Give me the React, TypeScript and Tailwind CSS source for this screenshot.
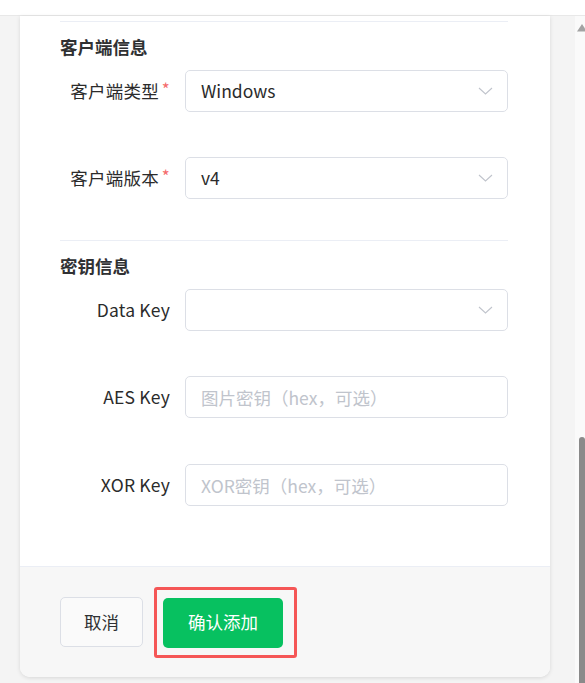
import React from 'react';

const font = "font-['Noto_Sans_CJK_SC','Noto_Sans',sans-serif]";

const Chevron = () => (
  <svg width="15" height="8" viewBox="0 0 15 8" fill="none" className="shrink-0">
    <path d="M1 1l6.5 6L14 1" stroke="#c0c4cc" strokeWidth="1.1" />
  </svg>
);

interface RowProps {
  label: string;
  required?: boolean;
  className?: string;
  children: React.ReactNode;
}

const FormRow: React.FC<RowProps> = ({ label, required, className = '', children }) => (
  <div className={`flex items-center h-[42px] ${className}`}>
    <div className="w-[110px] shrink-0 flex items-center justify-end text-[17.5px] text-[#2b2b2b] whitespace-nowrap tracking-[0.2px]">
      <span>{label}</span>
      {required && (
        <span className="ml-[3px] text-[17px] leading-none text-[#f56c6c] relative -top-[3px]">*</span>
      )}
    </div>
    <div className="ml-[15px] flex-1 h-full">{children}</div>
  </div>
);

const SelectBox: React.FC<{ value?: string }> = ({ value }) => (
  <div className="h-full flex items-center justify-between pl-[15px] pr-[14px] border border-[#dcdfe6] rounded-[5px] bg-white">
    <span className="text-[17.5px] text-[#2b2b2b]">{value}</span>
    <Chevron />
  </div>
);

const TextBox: React.FC<{ placeholder: string }> = ({ placeholder }) => (
  <input
    readOnly
    placeholder={placeholder}
    className={`w-full h-full px-[15px] border border-[#dcdfe6] rounded-[5px] bg-white text-[17.5px] text-[#303133] placeholder:text-[#c0c4cc] outline-none ${font}`}
  />
);

export default function App() {
  return (
    <div className={`h-[683px] w-[585px] overflow-hidden flex flex-col bg-white ${font}`}>
      {/* top strip */}
      <div className="h-[16px] shrink-0 bg-white border-b border-[#e8e8e8]" />

      <div className="flex flex-1 min-h-0">
        {/* page */}
        <div className="flex-1 bg-[#f4f4f4] pl-[20px] pr-[25px]">
          <div className="bg-white rounded-b-[10px] shadow-[0_1px_4px_rgba(0,0,0,0.12)] overflow-hidden">
            <div className="pl-[40px] pr-[42px] pt-[5px]">
              <div className="h-px bg-[#ebeef5]" />

              {/* 客户端信息 */}
              <div className="mt-[13px] h-[24px] leading-[24px] text-[17.5px] font-bold text-[#303133]">
                客户端信息
              </div>
              <FormRow label="客户端类型" required className="mt-[11px]">
                <SelectBox value="Windows" />
              </FormRow>
              <FormRow label="客户端版本" required className="mt-[45px]">
                <SelectBox value="v4" />
              </FormRow>

              <div className="mt-[41px] h-px bg-[#ebeef5]" />

              {/* 密钥信息 */}
              <div className="mt-[13px] h-[24px] leading-[24px] text-[17.5px] font-bold text-[#303133]">
                密钥信息
              </div>
              <FormRow label="Data Key" className="mt-[11px]">
                <SelectBox />
              </FormRow>
              <FormRow label="AES Key" className="mt-[45px]">
                <TextBox placeholder="图片密钥（hex，可选）" />
              </FormRow>
              <FormRow label="XOR Key" className="mt-[46px]">
                <TextBox placeholder="XOR密钥（hex，可选）" />
              </FormRow>
              <div className="h-[60px]" />
            </div>

            {/* footer */}
            <div className="h-[111px] bg-[#f7f7f7] border-t border-[#ebeef5] pl-[40px] flex items-center">
              <button className="w-[83px] h-[50px] rounded-[5px] border border-[#dcdfe6] bg-[#fafafa] text-[17.5px] text-[#303133]">
                取消
              </button>
              <div className="ml-[11px] border-[3px] border-[#f55656] rounded-[3px] pt-[8px] pb-[7px] pl-[6px] pr-[11px]">
                <button className="w-[120px] h-[50px] rounded-[5px] bg-[#07c160] text-[17.5px] text-white block">
                  确认添加
                </button>
              </div>
            </div>
          </div>
        </div>

        {/* scrollbar */}
        <div className="w-[10px] shrink-0 bg-[#fafafa] flex flex-col justify-between">
          <svg width="10" height="10" viewBox="0 0 10 10" className="mt-[6px] ml-[2px]">
            <path d="M0 9.5L5 2l5 7.5z" fill="#a3a3a3" />
          </svg>
          <div className="ml-[4px] w-[6px] h-[246px] bg-[#8a8a8a] rounded-t-[4px]" />
        </div>
      </div>
    </div>
  );
}
